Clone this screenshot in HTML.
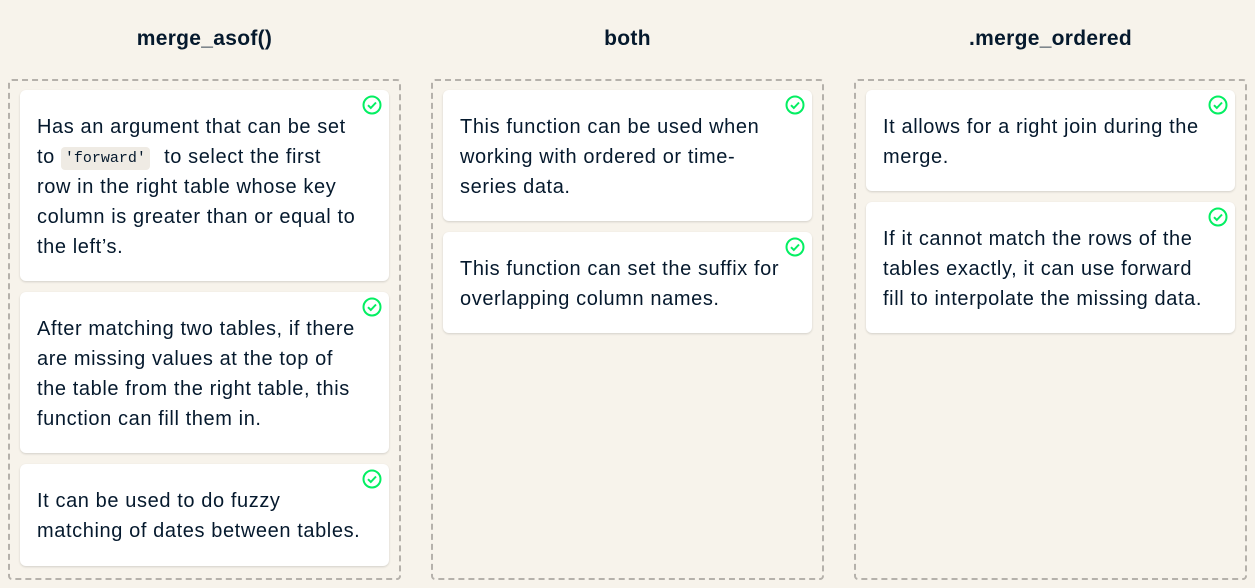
<!DOCTYPE html>
<html><head><style>
body{margin:0;width:1255px;height:588px;background:#f7f3eb;font-family:"Liberation Sans",sans-serif;color:#05192d;position:relative;overflow:hidden}
.h{position:absolute;top:24px;width:391px;text-align:center;font-weight:bold;font-size:21px;letter-spacing:0.3px;line-height:30px}
.col{position:absolute;top:79px;width:389px;height:497px;border:2px dashed #b5b1ab;border-radius:4px}
.card{position:absolute;left:10px;width:334px;background:#fff;border-radius:6px;box-shadow:0 1px 2px rgba(0,0,0,.15);padding:22px 18px 19px 17px;font-size:20px;letter-spacing:0.6px;line-height:30px;white-space:nowrap}
.card svg{position:absolute;right:7px;top:5px}
code{font-family:"Liberation Mono",monospace;font-size:15px;line-height:15px;letter-spacing:0;background:#efebe4;border-radius:4px;padding:4px 4px;margin:0 8px 0 6px;display:inline-block;vertical-align:1px}
</style></head><body>
<div class="h" style="left:9px">merge_asof()</div>
<div class="h" style="left:432px">both</div>
<div class="h" style="left:855px">.merge_ordered</div>
<svg width="0" height="0" style="position:absolute"><defs><g id="ck"><circle cx="10" cy="10" r="8.5" fill="none" stroke="#03ef62" stroke-width="2"/><path d="M6 10.2l2.8 2.8 5.2-5.5" fill="none" stroke="#03ef62" stroke-width="2"/></g></defs></svg>
<div class="col" style="left:8px">
<div class="card" style="top:9px;height:150px"><svg width="20" height="20"><use href="#ck"/></svg>Has an argument that can be set<br>to<code>'forward'</code> to select the first<br>row in the right table whose key<br>column is greater than or equal to<br>the left’s.</div>
<div class="card" style="top:211px;height:120px"><svg width="20" height="20"><use href="#ck"/></svg>After matching two tables, if there<br>are missing values at the top of<br>the table from the right table, this<br>function can fill them in.</div>
<div class="card" style="top:383px;height:61px"><svg width="20" height="20"><use href="#ck"/></svg>It can be used to do fuzzy<br>matching of dates between tables.</div>
</div>
<div class="col" style="left:431px">
<div class="card" style="top:9px;height:90px"><svg width="20" height="20"><use href="#ck"/></svg>This function can be used when<br>working with ordered or time-<br>series data.</div>
<div class="card" style="top:151px;height:60px"><svg width="20" height="20"><use href="#ck"/></svg>This function can set the suffix for<br>overlapping column names.</div>
</div>
<div class="col" style="left:854px">
<div class="card" style="top:9px;height:60px"><svg width="20" height="20"><use href="#ck"/></svg>It allows for a right join during the<br>merge.</div>
<div class="card" style="top:121px;height:90px"><svg width="20" height="20"><use href="#ck"/></svg>If it cannot match the rows of the<br>tables exactly, it can use forward<br>fill to interpolate the missing data.</div>
</div>
</body></html>
